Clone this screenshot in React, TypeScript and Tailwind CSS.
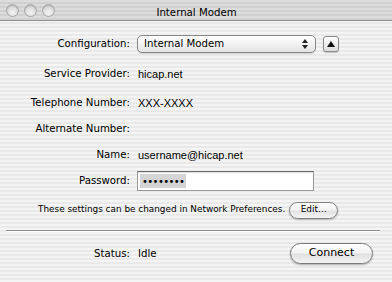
import React from "react";

const lucida = "font-['DejaVu_Sans',sans-serif] text-[10.2px] text-black";
const small = "font-['DejaVu_Sans',sans-serif] text-[8.9px] text-black";
const helv = "font-['Liberation_Sans',Arial,sans-serif] text-[11px] text-black";

function Light() {
  return (
    <div className="w-[13px] h-[13px] rounded-full border border-[#a8a8a8] bg-[radial-gradient(circle_at_50%_70%,#f4f4f4_0%,#dcdcdc_55%,#c4c4c4_100%)] shadow-[inset_0_1px_1px_rgba(0,0,0,0.15)]" />
  );
}

function Row({
  label,
  children,
  className = "",
}: {
  label: string;
  children?: React.ReactNode;
  className?: string;
}) {
  return (
    <div className={`flex items-center h-[20px] ${className}`}>
      <div className={`w-[131px] text-right pr-[1px] ${lucida}`}>{label}</div>
      <div className="pl-[6px] flex items-center">{children}</div>
    </div>
  );
}

export default function App() {
  return (
    <div className="w-[392px] h-[282px] overflow-hidden flex flex-col bg-[repeating-linear-gradient(180deg,#f4f4f4_0px,#f4f4f4_2px,#e9e9e9_2px,#e9e9e9_4px)]">
      {/* Title bar */}
      <div className="h-[21px] flex items-center border-b border-[#8f8f8f] bg-[repeating-linear-gradient(180deg,#dcdcdc_0px,#dcdcdc_2px,#d0d0d0_2px,#d0d0d0_4px)]">
        <div className="flex items-center gap-[5px] pl-[6px]">
          <Light />
          <Light />
          <Light />
        </div>
        <div className="flex-1 text-center pr-[54px]">
          <span className={`${lucida} text-[#555]`}>Internal Modem</span>
        </div>
      </div>

      {/* Configuration */}
      <Row label="Configuration:" className="mt-[13px]">
        <div className="w-[179px] h-[18px] rounded-[5px] border border-[#8a8a8a] bg-[linear-gradient(180deg,#ffffff_0%,#f2f2f2_50%,#e4e4e4_100%)] shadow-[0_1px_1px_rgba(0,0,0,0.15)] flex items-center pl-[6px] pr-[7px]">
          <span className={`flex-1 ${lucida}`}>Internal Modem</span>
          <svg width="6" height="10" viewBox="0 0 6 10">
            <path d="M3 0 L6 4 L0 4 Z" fill="#222" />
            <path d="M3 10 L6 6 L0 6 Z" fill="#222" />
          </svg>
        </div>
        <div className="ml-[7px] w-[16px] h-[16px] rounded-[3px] border border-[#8a8a8a] bg-[linear-gradient(180deg,#ffffff_0%,#ececec_60%,#dcdcdc_100%)] shadow-[0_1px_1px_rgba(0,0,0,0.2)] flex items-center justify-center">
          <svg width="8" height="6" viewBox="0 0 8 6">
            <path d="M4 0 L8 6 L0 6 Z" fill="#111" />
          </svg>
        </div>
      </Row>

      <Row label="Service Provider:" className="mt-[10px]">
        <span className={`${helv} pl-[1px]`}>hicap.net</span>
      </Row>
      <Row label="Telephone Number:" className="mt-[9px]">
        <span className={`${helv} pl-[1px]`}>XXX-XXXX</span>
      </Row>
      <Row label="Alternate Number:" className="mt-[6px]" />
      <Row label="Name:" className="mt-[6px]">
        <span className={`${helv} pl-[1px]`}>username@hicap.net</span>
      </Row>
      <Row label="Password:" className="mt-[6px]">
        <div className="w-[177px] h-[20px] bg-white border border-[#9a9a9a] border-t-[#6e6e6e] shadow-[inset_0_1px_1px_rgba(0,0,0,0.15)] flex items-center pl-[2px]">
          <span className="bg-[#d4d4d4] px-[2px] h-[14px] flex items-center font-['DejaVu_Sans',sans-serif] text-[10px] tracking-[-0.6px] text-black">
            ••••••••
          </span>
        </div>
      </Row>

      {/* Network preferences */}
      <div className="mt-[9px] h-[20px] flex items-center pl-[38px]">
        <span className={small}>These settings can be changed in Network Preferences.</span>
        <button className="ml-[4px] w-[49px] h-[17px] rounded-full border border-[#7e7e7e] bg-[linear-gradient(180deg,#ffffff_0%,#f3f3f3_45%,#e2e2e2_55%,#f4f4f4_100%)] shadow-[0_1px_2px_rgba(0,0,0,0.25)] flex items-center justify-center">
          <span className={small}>Edit…</span>
        </button>
      </div>

      {/* Separator */}
      <div className="mt-[10px] mx-[6px] w-[374px] h-[2px] border-t border-[#8c8c8c] border-b border-b-white" />

      {/* Status */}
      <div className="mt-[11px] h-[21px] flex items-center">
        <div className={`w-[131px] text-right pr-[1px] ${lucida}`}>Status:</div>
        <div className={`pl-[7px] w-[159px] ${lucida}`}>Idle</div>
        <button className="w-[83px] h-[21px] rounded-full border border-[#7a7a7a] bg-[linear-gradient(180deg,#ffffff_0%,#f3f3f3_45%,#e0e0e0_55%,#f4f4f4_100%)] shadow-[0_1px_2px_rgba(0,0,0,0.3)] flex items-center justify-center">
          <span className="font-['DejaVu_Sans',sans-serif] text-[11px] text-black">Connect</span>
        </button>
      </div>
    </div>
  );
}
